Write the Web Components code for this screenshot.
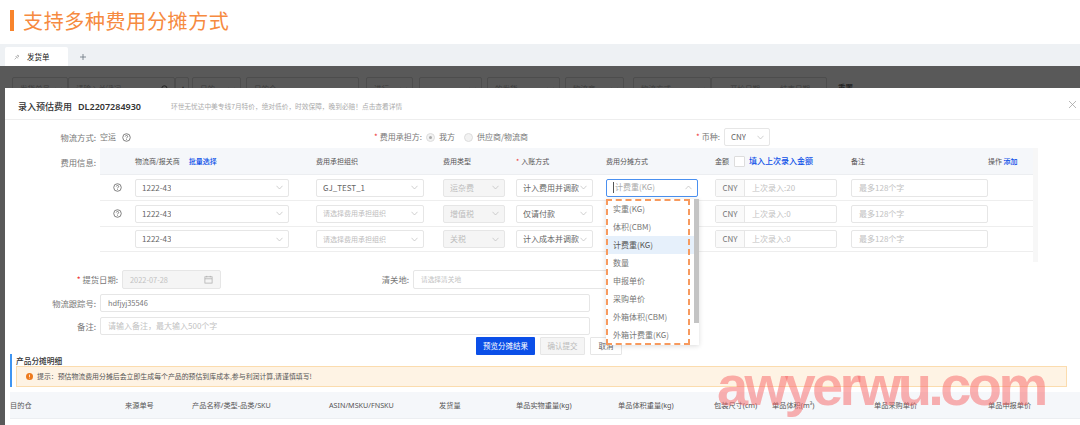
<!DOCTYPE html>
<html lang="zh">
<head>
<meta charset="utf-8">
<title>发货单</title>
<style>
    html, body { margin: 0; padding: 0; background: #fff; }
    body {
        width: 1080px;
        height: 425px;
        overflow: hidden;
        position: relative;
        font-family: "Noto Sans CJK SC", "Noto Sans", sans-serif;
    }
</style>
</head>
<body>
<page-title>支持多种费用分摊方式</page-title>
<tab-strip></tab-strip>
<filter-strip></filter-strip>
<fee-modal></fee-modal>
<water-mark>awyerwu.com</water-mark>

<script>
const FONT = '"Noto Sans CJK SC", "Noto Sans", sans-serif';
const LATIN = '"Noto Sans", "Noto Sans CJK SC", sans-serif';

// 小图标
const chevron = (up, color) => `<svg width="7" height="5" viewBox="0 0 7 5" fill="none" stroke="${color || '#bbb'}" stroke-width="0.7" style="flex:none"><path d="${up ? 'M0.5 4.2L3.5 1L6.5 4.2' : 'M0.5 0.8L3.5 4L6.5 0.8'}"/></svg>`;
const helpIcon = `<svg width="9" height="9" viewBox="0 0 10 10" fill="none" stroke="#666" stroke-width="0.9"><circle cx="5" cy="5" r="4.2"/><path d="M3.6 3.9C3.7 2.2 6.4 2.4 6.3 3.9C6.3 4.9 5 4.9 5 6"/><path d="M5 6.8V7.6"/></svg>`;
const calendar = `<svg width="9" height="9" viewBox="0 0 10 10" fill="none" stroke="#aaa" stroke-width="0.8"><rect x="1" y="2" width="8" height="7"/><path d="M1 4.2H9M3 1V2.6M7 1V2.6"/></svg>`;

class PageTitle extends HTMLElement {
    constructor() {
        super();
        this.attachShadow({mode: 'open'}).innerHTML = `
            <style>
                :host {
                    display: flex;
                    align-items: center;
                    gap: 9px;
                    height: 44px;
                    padding: 0 0 3px 10px;
                    box-sizing: border-box;
                    background: #fff;
                }
                .bar { width: 4px; height: 21px; background: #f8842c; }
                .txt { font: 400 20px/1 ${FONT}; letter-spacing: 0.65px; color: #f68a40; }
            </style>
            <div class="bar"></div>
            <div class="txt"><slot></slot></div>
        `;
    }
}

class TabStrip extends HTMLElement {
    constructor() {
        super();
        this.attachShadow({mode: 'open'}).innerHTML = `
            <style>
                :host {
                    display: flex;
                    height: 22px;
                    box-sizing: border-box;
                    padding: 3px 0 0 5px;
                    background: #eef1f4;
                    font: 7.5px/1 ${FONT};
                }
                .tab {
                    width: 63px;
                    background: #fff;
                    display: flex;
                    align-items: center;
                    gap: 7px;
                    padding-left: 9px;
                    box-sizing: border-box;
                    color: #222;
                    border-radius: 2px 2px 0 0;
                }
                .add { margin-left: 11px; align-self: center; display: flex; }
            </style>
            <div class="tab">
                <svg width="6" height="6" viewBox="0 0 6 6" fill="none" stroke="#999" stroke-width="0.7"><path d="M0.6 5.4L2.4 3.6M1.6 2.2L3.8 4.4M2.6 2.6L3.8 1L5 2.2L3.4 3.4"/></svg>
                <span>发货单</span>
            </div>
            <div class="add">
                <svg width="8" height="8" viewBox="0 0 8 8" stroke="#68747f" stroke-width="0.8"><path d="M4 1V7M1 4H7"/></svg>
            </div>
        `;
    }
}

class FilterStrip extends HTMLElement {
    constructor() {
        super();
        // 遮罩下面的筛选栏，只露出上半部分
        const boxes = [
            [56, '发货单号', 'c'], [107, '请输入关键词', 's'], [11, '', 'k'], [49, '日的', 'c', 3], [113, '日的仓', '', 5],
            [47, '进行', 'c', 7], [63, '', 'c', 6], [73, '的发货', 'c', 5], [59, '物流商', 'c', 5], [78, '物流方式', 'c', 9]
        ];
        const html = boxes.map(([w, t, k, m]) => `
            <div class="box" style="width:${w}px;margin-left:${m || 0}px">
                <span>${t}</span>
                ${k === 'c' ? chevron(false, '#333') : ''}
                ${k === 's' ? '<svg width="8" height="8" viewBox="0 0 8 8" fill="none" stroke="#222" stroke-width="1"><circle cx="3.4" cy="3.4" r="2.6"/><path d="M5.4 5.4L7.4 7.4"/></svg>' : ''}
                ${k === 'k' ? '<b class="kebab">⋮</b>' : ''}
            </div>`).join('');
        this.attachShadow({mode: 'open'}).innerHTML = `
            <style>
                :host {
                    display: flex;
                    height: 22px;
                    box-sizing: border-box;
                    padding: 11px 0 0 12px;
                    overflow: hidden;
                    background: #595959;
                    font: 7.5px/1 ${FONT};
                    color: #3c3c3c;
                }
                .box {
                    height: 24px;
                    box-sizing: border-box;
                    flex: none;
                    border: 1px solid #4d4d4d;
                    border-radius: 2px;
                    display: flex;
                    align-items: center;
                    justify-content: space-between;
                    padding: 0 5px 0 7px;
                }
                .kebab { font-size: 8px; color: #222; margin-left: -4px; }
                .date { width: 116px; margin-left: 0; justify-content: center; gap: 8px; }
                .reset { margin-left: 11px; font-weight: 700; color: #222; padding-top: 7px; }
            </style>
            ${html}
            <div class="box date"><span>开始日期</span><span>~</span><span>结束日期</span></div>
            <div class="reset">重置</div>
        `;
    }
}

class FeeSelect extends HTMLElement {
    constructor() {
        super();
        const value = this.getAttribute('value');
        const open = this.hasAttribute('open');
        const off = this.hasAttribute('disabled');
        const text = value || this.getAttribute('placeholder') || '';
        this.attachShadow({mode: 'open'}).innerHTML = `
            <style>
                :host { display: block; position: relative; height: 18px; font: 8px/1 ${FONT}; }
                .box {
                    height: 100%;
                    box-sizing: border-box;
                    display: flex;
                    align-items: center;
                    justify-content: space-between;
                    padding: 0 5px 0 6px;
                    border: 1px solid ${open ? '#4a90f0' : '#e6e6e6'};
                    border-radius: 2px;
                    background: ${off ? '#f5f5f5' : '#fff'};
                    color: ${off || !value ? '#bdbdbd' : '#666'};
                    white-space: nowrap;
                }
                .caret { display: inline-block; width: 1px; height: 11px; background: #555; margin-right: 1px; vertical-align: middle; }
                .txt { overflow: hidden; ${open ? 'color:#aaa;' : ''} }
            </style>
            <div class="box">
                <span class="txt">${open ? '<i class="caret"></i>' : ''}${text}</span>
                ${chevron(open)}
            </div>
            <slot></slot>
        `;
    }
}

class FeeDropdown extends HTMLElement {
    constructor() {
        super();
        const items = ['实重(KG)', '体积(CBM)', '计费重(KG)', '数量', '申报单价', '采购单价', '外箱体积(CBM)', '外箱计费重(KG)'];
        this.attachShadow({mode: 'open'}).innerHTML = `
            <style>
                :host {
                    position: absolute;
                    left: 0;
                    top: 20px;
                    width: 93px;
                    height: 146px;
                    background: #fff;
                    box-shadow: 0 1px 5px rgba(0, 0, 0, 0.14);
                    z-index: 5;
                    font: 8px/1 ${FONT};
                    color: #777;
                }
                .list { padding-top: 1px; }
                .item { height: 18.1px; display: flex; align-items: center; padding-left: 7px; width: 88px; box-sizing: border-box; }
                .item.on { background: #e6f0fb; color: #555; }
                .dash {
                    position: absolute;
                    left: 0;
                    top: 0;
                    width: 84px;
                    height: 146px;
                    box-sizing: border-box;
                    border: 2px dashed #f79a5e;
                }
                .thumb { position: absolute; left: 88px; top: 0; width: 5px; height: 124px; background: #c4c4c4; }
            </style>
            <div class="list">
                ${items.map((t, i) => `<div class="item ${i === 2 ? 'on' : ''}">${t}</div>`).join('')}
            </div>
            <div class="thumb"></div>
            <div class="dash"></div>
        `;
    }
}

class FeeInput extends HTMLElement {
    constructor() {
        super();
        const value = this.getAttribute('value');
        const addon = this.getAttribute('addon');
        this.attachShadow({mode: 'open'}).innerHTML = `
            <style>
                :host {
                    display: flex;
                    height: 18px;
                    box-sizing: border-box;
                    border: 1px solid #e6e6e6;
                    border-radius: 2px;
                    background: #fff;
                    font: 8px/1 ${FONT};
                    white-space: nowrap;
                }
                .addon { width: 28px; flex: none; display: flex; align-items: center; justify-content: center; background: #fafafa; border-right: 1px solid #e6e6e6; color: #777; }
                .val { flex: 1; display: flex; align-items: center; justify-content: space-between; padding: 0 7px; color: ${value ? '#777' : '#c2c2c2'}; }
            </style>
            ${addon ? `<div class="addon">${addon}</div>` : ''}
            <div class="val"><span>${value || this.getAttribute('placeholder') || ''}</span><slot></slot></div>
        `;
    }
}

class FeeTable extends HTMLElement {
    constructor() {
        super();
        const rows = [
            {help: 1, org: 'GJ_TEST_1', type: '运杂费', way: '计入费用并调款', open: 1, last: '上次录入:20'},
            {help: 1, org: '', type: '增值税', way: '仅请付款', last: '上次录入:0'},
            {help: 0, org: '', type: '关税', way: '计入成本并调款', last: '上次录入:0'}
        ];
        const rowHtml = rows.map(r => `
            <div class="row">
                <div class="help">${r.help ? helpIcon : ''}</div>
                <div><fee-select value="1222-43" style="width:154px"></fee-select></div>
                <div><fee-select ${r.org ? `value="${r.org}" style="width:108px"` : 'placeholder="请选择费用承担组织" style="width:108px;font-size:7px"'}></fee-select></div>
                <div><fee-select disabled placeholder="${r.type}" style="width:62px"></fee-select></div>
                <div><fee-select value="${r.way}" style="width:77px"></fee-select></div>
                <div>${r.open
                    ? '<fee-select open placeholder="计费重(KG)" style="width:92px"><fee-dropdown></fee-dropdown></fee-select>'
                    : '<fee-select placeholder="" style="width:92px"></fee-select>'}</div>
                <div><fee-input addon="CNY" placeholder="${r.last}" style="width:122px"></fee-input></div>
                <div><fee-input placeholder="最多128个字" style="width:137px"></fee-input></div>
            </div>`).join('');
        this.attachShadow({mode: 'open'}).innerHTML = `
            <style>
                :host {
                    display: block;
                    width: 938px;
                    height: 114px;
                    box-sizing: border-box;
                    border-right: 5px solid #f7f7f7;
                    font: 7px/1 ${FONT};
                    color: #555;
                    --cols: 35px 181px 127px 73px 90px 109px 136px 137px 1fr;
                }
                .head, .row { display: grid; grid-template-columns: var(--cols); align-items: center; }
                .head { height: 27px; background: #f5f7fa; border-bottom: 1px solid #eceef1; box-sizing: border-box; white-space: nowrap; }
                .row { height: 26px; border-bottom: 1px solid #eeeeee; box-sizing: border-box; }
                .row:last-child { height: 25px; }
                .help { display: flex; justify-content: center; }
                .req { color: #e33; margin-right: 2px; }
                .link { color: #0b4fe8; font-weight: 500; }
                .pick { margin-left: 9px; }
                .fill { display: flex; align-items: center; }
                .fill .link { font-size: 8px; }
                .chk { width: 9px; height: 9px; border: 1px solid #ddd; background: #fff; margin: 0 4px 0 5px; border-radius: 1px; }
            </style>
            <div class="head">
                <div></div>
                <div>物流商/报关商<span class="link pick">批量选择</span></div>
                <div>费用承担组织</div>
                <div>费用类型</div>
                <div><span class="req">*</span>入账方式</div>
                <div>费用分摊方式</div>
                <div class="fill">金额<span class="chk"></span><span class="link">填入上次录入金额</span></div>
                <div>备注</div>
                <div>操作 <span class="link">添加</span></div>
            </div>
            ${rowHtml}
        `;
    }
}

class GoodsHead extends HTMLElement {
    constructor() {
        super();
        const cols = [
            ['目的仓', 115], ['来源单号', 67], ['产品名称/类型-品类/SKU', 137], ['ASIN/MSKU/FNSKU', 110], ['发货量', 77],
            ['单品实物重量(kg)', 102], ['单品体积重量(kg)', 96], ['包装尺寸(cm)', 58], ['单品体积(m³)', 102], ['单品采购单价', 114], ['单品申报单价', 92]
        ];
        this.attachShadow({mode: 'open'}).innerHTML = `
            <style>
                :host {
                    display: flex;
                    align-items: center;
                    height: 27px;
                    margin-top: 5px;
                    box-sizing: border-box;
                    padding-top: 1px;
                    background: #f5f7fa;
                    border-bottom: 1px solid #eceef1;
                    font: 7.2px/1 ${LATIN};
                    color: #555;
                    white-space: nowrap;
                }
                div { flex: none; }
            </style>
            ${cols.map(([t, w]) => `<div style="width:${w}px">${t}</div>`).join('')}
        `;
    }
}

class FeeModal extends HTMLElement {
    constructor() {
        super();
        this.attachShadow({mode: 'open'}).innerHTML = `
            <style>
                :host {
                    display: block;
                    margin-left: 5px;
                    height: 337px;
                    background: #fff;
                    overflow: hidden;
                    font: 8px/1 ${FONT};
                    color: #777;
                    box-shadow: -5px 0 0 #595959;
                }
                .top {
                    height: 32px;
                    box-sizing: border-box;
                    border-bottom: 1px solid #eee;
                    display: flex;
                    align-items: center;
                    padding: 6px 3px 1px 13px;
                }
                .top h1 { margin: 0; font: 500 9px/1 ${FONT}; color: #333; }
                .top .no { font: 600 9px/1 ${LATIN}; color: #333; margin-left: 6px; }
                .top .tip { font-size: 6.7px; color: #aaa; margin-left: 30px; flex: 1; }
                .top svg { flex: none; margin-top: -4px; }
                .line1 { display: grid; grid-template-columns: 95px 274px 322px auto; height: 28px; box-sizing: border-box; padding-top: 6px; align-items: center; }
                .lab { text-align: right; padding-right: 4px; white-space: nowrap; font-size: 8.3px; }
                .field { display: flex; align-items: center; white-space: nowrap; }
                .req { color: #e33; margin-right: 2px; }
                .radio { width: 9px; height: 9px; box-sizing: border-box; border: 1px solid #ddd; border-radius: 50%; background: #f2f2f2; display: flex; align-items: center; justify-content: center; margin-right: 4px; }
                .radio i { width: 3px; height: 3px; border-radius: 50%; background: #aaa; }
                .info { display: flex; margin-bottom: 8px; }
                .info .lab { width: 95px; box-sizing: border-box; padding-top: 10px; flex: none; }
                .line { display: flex; align-items: center; margin-bottom: 5px; }
                .line .lab { width: 95px; box-sizing: border-box; flex: none; }
                .btns { display: flex; gap: 5px; margin: -3px 0 0 471px; height: 20px; align-items: flex-start; position: relative; }
                .btn { height: 18px; display: flex; align-items: center; justify-content: center; border-radius: 1px; box-sizing: border-box; font-size: 7.5px; }
                .pri { width: 59px; background: #0b4fe8; color: #fff; }
                .dis { width: 45px; background: #f5f5f5; border: 1px solid #e6e6e6; color: #bbb; }
                .sec { width: 32px; background: #fff; border: 1px solid #e6e6e6; color: #666; }
                .goods { margin: -3px 0 0 5px; }
                .side { border-left: 2px solid #3f95f2; padding-left: 4px; height: 33px; box-sizing: border-box; }
                .side h2 { margin: 0; height: 12px; font: 500 7.7px/13px ${FONT}; color: #333; }
                .alert {
                    width: 1051px;
                    height: 21px;
                    box-sizing: border-box;
                    background: #fef3e4;
                    border: 1px solid #fbdcae;
                    display: flex;
                    align-items: center;
                    padding-left: 9px;
                    gap: 4px;
                    font-size: 6.9px;
                    color: #555;
                }
                .alert svg { flex: none; }
            </style>
            <div class="top">
                <h1>录入预估费用</h1>
                <span class="no">DL2207284930</span>
                <span class="tip">环世无忧达中美专线7月特价，绝对低价，时效保障，晚到必赔！点击查看详情</span>
                <svg width="9" height="9" viewBox="0 0 9 9" stroke="#999" stroke-width="0.7"><path d="M1 1L8 8M8 1L1 8"/></svg>
            </div>
            <div class="line1">
                <div class="lab">物流方式:</div>
                <div class="field">空运<span style="margin-left:6px;display:flex">${helpIcon}</span></div>
                <div class="field">
                    <span class="req">*</span>费用承担方:
                    <span class="radio" style="margin-left:4px"><i></i></span><span style="margin-right:9px">我方</span>
                    <span class="radio"></span><span>供应商/物流商</span>
                </div>
                <div class="field"><span class="req">*</span>币种:
                    <fee-select value="CNY" style="width:46px;margin-left:4px"></fee-select>
                </div>
            </div>
            <div class="info">
                <div class="lab">费用信息:</div>
                <fee-table></fee-table>
            </div>
            <div class="line">
                <div class="lab" style="width:117px"><span class="req">*</span>提货日期:</div>
                <fee-input placeholder="2022-07-28" style="width:99px;height:19px;background:#f5f5f5;font-size:7.4px">${calendar}</fee-input>
                <div class="lab" style="width:192px">清关地:</div>
                <fee-input placeholder="请选择清关地" style="width:200px;height:19px;font-size:6.7px"></fee-input>
            </div>
            <div class="line">
                <div class="lab">物流跟踪号:</div>
                <fee-input value="hdfjyj35546" style="width:490px;font-size:7.4px"></fee-input>
            </div>
            <div class="line">
                <div class="lab">备注:</div>
                <fee-input placeholder="请输入备注，最大输入500个字" style="width:490px"></fee-input>
            </div>
            <div class="btns">
                <div class="btn pri">预览分摊结果</div>
                <div class="btn dis">确认提交</div>
                <div class="btn sec">取消</div>
            </div>
            <div class="goods">
                <div class="side">
                    <h2>产品分摊明细</h2>
                    <div class="alert">
                        <svg width="7" height="7" viewBox="0 0 8 8"><circle cx="4" cy="4" r="4" fill="#ee7a1c"/><path d="M4 1.8V4.6M4 5.4V6.2" stroke="#fff" stroke-width="0.9"/></svg>
                        <span>提示：预估物流费用分摊后会立即生成每个产品的预估到库成本,参与利润计算,请谨慎填写!</span>
                    </div>
                </div>
                <goods-head></goods-head>
            </div>
        `;
    }
}

class WaterMark extends HTMLElement {
    constructor() {
        super();
        this.attachShadow({mode: 'open'}).innerHTML = `
            <style>
                :host {
                    position: absolute;
                    left: 717px;
                    top: 358px;
                    z-index: 9;
                    font: 700 56px/1 "Liberation Sans", sans-serif;
                    letter-spacing: -3.6px;
                    color: rgba(248, 100, 100, 0.5);
                    white-space: nowrap;
                }
            </style>
            <slot></slot>
        `;
    }
}

// 子元素先注册，外层后注册
customElements.define('fee-dropdown', FeeDropdown);
customElements.define('fee-select', FeeSelect);
customElements.define('fee-input', FeeInput);
customElements.define('fee-table', FeeTable);
customElements.define('goods-head', GoodsHead);
customElements.define('page-title', PageTitle);
customElements.define('tab-strip', TabStrip);
customElements.define('filter-strip', FilterStrip);
customElements.define('fee-modal', FeeModal);
customElements.define('water-mark', WaterMark);
</script>
</body>
</html>
